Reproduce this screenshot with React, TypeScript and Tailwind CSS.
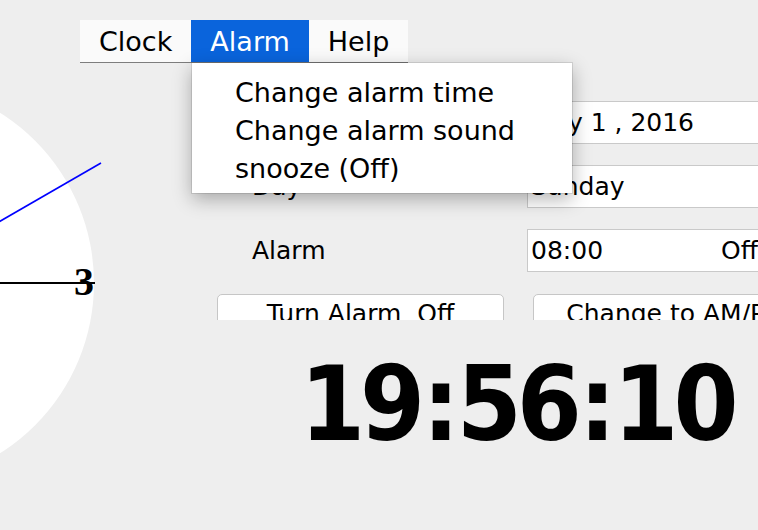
import type { ReactNode } from 'react';

const MENUS = ['Clock', 'Alarm', 'Help'];
const ALARM_ITEMS = ['Change alarm time', 'Change alarm sound', 'snooze (Off)'];

function ClockFace() {
  // center sits off the left edge of the window
  const cx = -107;
  const cy = 220;
  return (
    <svg width={200} height={467} className="shrink-0 overflow-visible">
      <circle cx={cx} cy={cy} r={201} fill="#ffffff" />
      <text
        x={74}
        y={232}
        fontFamily="'Liberation Serif', serif"
        fontWeight="bold"
        fontSize={40}
        fill="#000"
      >
        3
      </text>
      <line x1={cx} y1={cy} x2={95} y2={cy} stroke="#000" strokeWidth={2} />
      <line x1={cx} y1={cy} x2={101} y2={100} stroke="#0000ff" strokeWidth={1.6} />
    </svg>
  );
}

function Row({ label, children }: { label: string; children: ReactNode }) {
  return (
    <div className="flex items-center h-[43px] pl-[52px]">
      <div className="w-[275px] shrink-0 text-[25px]">{label}</div>
      <div className="w-[300px] shrink-0 h-[43px] flex items-center pl-[3px] bg-white border border-[#c9c9c9] text-[25px] whitespace-nowrap">
        {children}
      </div>
    </div>
  );
}

function PanelButton({ children }: { children: ReactNode }) {
  return (
    <button
      type="button"
      className="w-[287px] h-[40px] shrink-0 bg-white border border-[#c6c6c6] rounded-[5px] text-[25px] whitespace-pre"
    >
      {children}
    </button>
  );
}

export default function App() {
  return (
    <div className="relative w-[758px] h-[530px] overflow-hidden bg-[#eeeeee] text-black font-['DejaVu_Sans',sans-serif] flex flex-col">
      {/* menu bar */}
      <div className="flex pt-[20px] pl-[80px] shrink-0">
        <div className="flex border-b border-[#7d7d7d]">
          {MENUS.map((m) => (
            <div
              key={m}
              className={
                m === 'Alarm'
                  ? 'h-[42px] leading-[44px] px-[19px] text-[27px] bg-[#0a64dc] text-white'
                  : 'h-[42px] leading-[44px] px-[19px] text-[27px] bg-[#fafafa]'
              }
            >
              {m}
            </div>
          ))}
        </div>
      </div>

      <div className="flex flex-1">
        <ClockFace />

        <div className="w-[558px] shrink-0 flex flex-col">
          <div className="h-[257px] overflow-hidden pt-[38px] flex flex-col gap-[21px]">
            <Row label="Date">May 1 , 2016</Row>
            <Row label="Day">Sunday</Row>
            <Row label="Alarm">
              <span>08:00</span>
              <span className="ml-[118px]">Off</span>
            </Row>
            <div className="flex gap-[29px] pl-[17px] mt-[1px]">
              <PanelButton>Turn Alarm  Off</PanelButton>
              <PanelButton>Change to AM/PM</PanelButton>
            </div>
          </div>

          <div className="mt-[32px] pl-[100px] text-[104px] font-bold leading-none tracking-[-5px] whitespace-nowrap font-['DejaVu_Sans_Condensed','DejaVu_Sans',sans-serif] [font-stretch:condensed]">
            19<span className="mx-[2px]">:</span>56<span className="mx-[2px]">:</span>10
          </div>
        </div>
      </div>

      {/* open Alarm menu */}
      <div className="absolute left-[192px] top-[63px] w-[380px] h-[130px] bg-white pt-[11px] pl-[43px] shadow-[0_6px_18px_rgba(0,0,0,0.3)] ring-1 ring-black/10">
        {ALARM_ITEMS.map((t) => (
          <div key={t} className="text-[27px] leading-[38px] whitespace-nowrap">
            {t}
          </div>
        ))}
      </div>
    </div>
  );
}
